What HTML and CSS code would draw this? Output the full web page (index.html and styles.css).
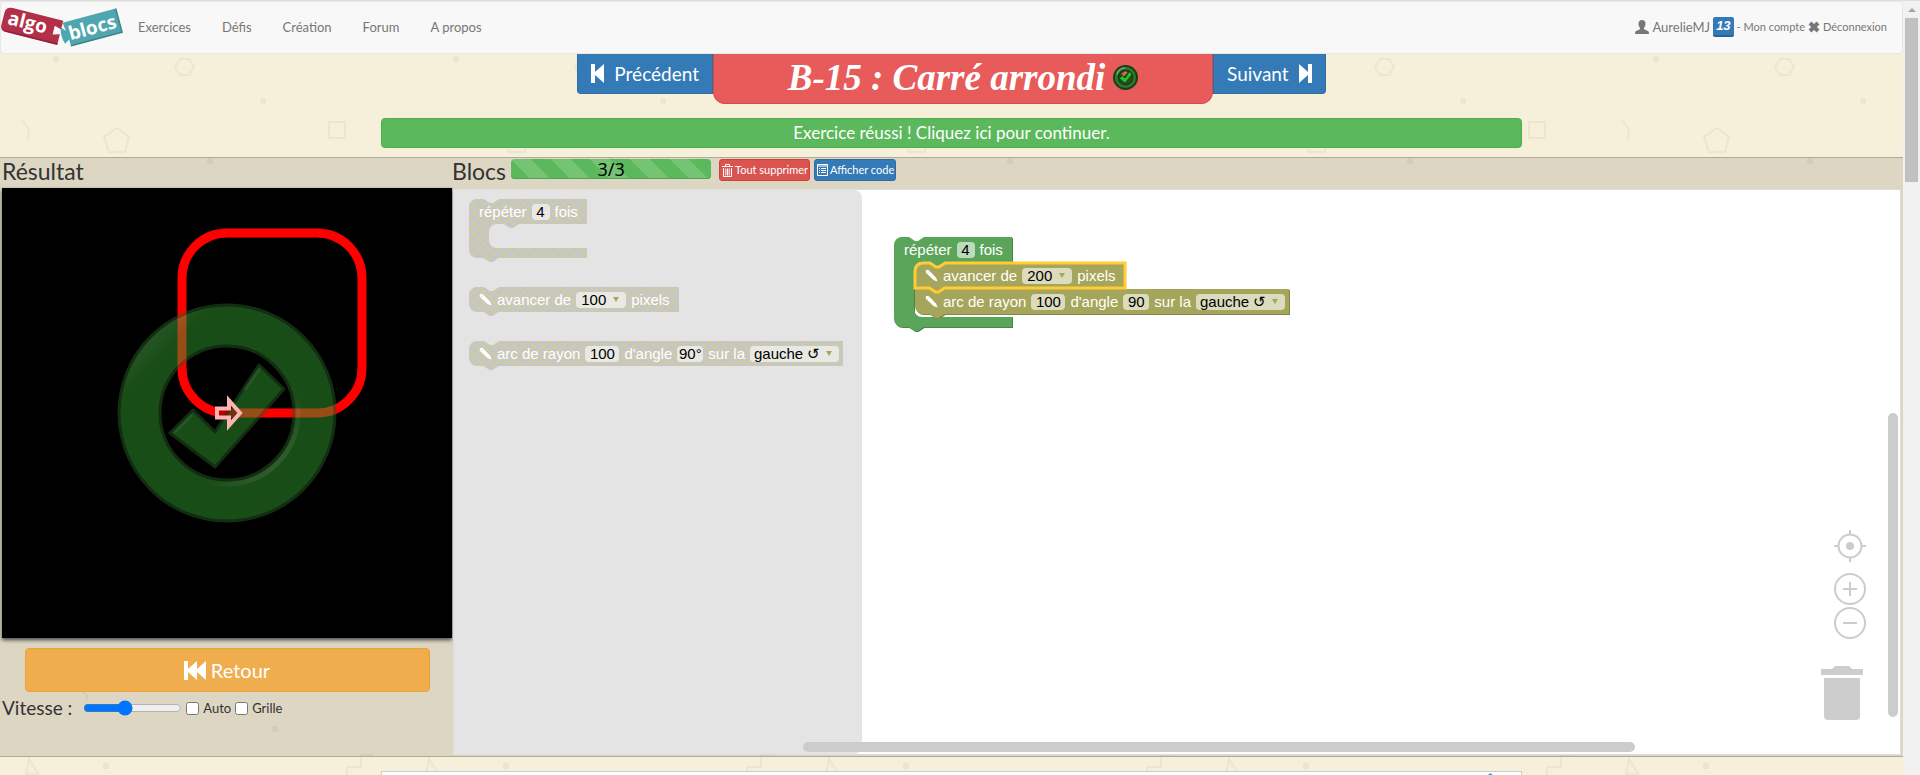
FILE: index.html
```html
<!DOCTYPE html>
<html lang="fr">
<head>
<meta charset="utf-8">
<title>AlgoBlocs - B-15 : Carré arrondi</title>
<link rel="stylesheet" href="styles.css">
</head>
<body>
<svg class="defs" width="0" height="0" aria-hidden="true">
  <defs>
    <pattern id="disabled" width="10" height="10" patternUnits="userSpaceOnUse">
      <rect width="10" height="10" fill="#c6c6c6"/>
      <path d="M0 0l10 10M10 0L0 10" stroke="#d3d284" stroke-width="1"/>
    </pattern>
    <symbol id="pencil" viewBox="0 0 14 14">
      <path d="M1 1.500Q2.500 0 4.500 1.500L12 9.500 13.500 13.500 9.500 12 1.500 4.500Q0 3 1 1.500z" fill="#fff"/>
      <path d="M2.500 4.500l2-2" stroke="#b5b5a0" stroke-width=".5"/>
    </symbol>
  </defs>
</svg>

<div class="page">
  <nav class="navbar">
    <a class="logo" href="#" aria-label="algo blocs">
      <svg width="124" height="42" viewBox="0 0 124 42">
        <g transform="rotate(14 30 20)">
          <path d="M8 7H60V16l-7-2v9l7-2V32H7Q1 32 1 26V14Q1 7 8 7z" fill="#b32f48"/>
          <path d="M5 31H60" stroke="#8e2338" stroke-width="1.500"/>
          <text x="6" y="24" class="logo-text">algo</text>
        </g>
        <g transform="rotate(-15 92 22)">
          <path d="M64 9H119V34H66V27l-5 3q-3-8 0-17l4 5z" fill="#4fa6af"/>
          <path d="M66 33.500H119V9" stroke="#3b868e" stroke-width="1.500" fill="none"/>
          <text x="67" y="28" class="logo-text">blocs</text>
        </g>
      </svg>
    </a>
    <div class="nav-links">
      <a href="#">Exercices</a><a href="#">Défis</a><a href="#">Création</a><a href="#">Forum</a><a href="#">A propos</a>
    </div>
    <div class="user">
      <a href="#" class="user-name"><svg width="14" height="14" viewBox="0 0 14 14"><path d="M7 0c2.500 0 3.700 1.700 3.500 4.200C10.300 6 9.500 7 9 8v1.200L13 11q1 .5 1 3H0q0-2.500 1-3L5 9.200V8C4.500 7 3.700 6 3.500 4.200 3.300 1.700 4.500 0 7 0z" fill="currentColor"/></svg>AurelieMJ</a>
      <span class="level">13</span>
      <a href="#" class="small">- Mon compte</a>
      <a href="#" class="small logout"><svg width="12" height="12" viewBox="0 0 12 12"><path d="M2 2l8 8M10 2l-8 8" stroke="currentColor" stroke-width="4"/></svg>Déconnexion</a>
    </div>
  </nav>

  <header class="title-row">
    <button class="step prev"><svg width="13" height="19" viewBox="0 0 13 19"><path d="M0 0h4v8l9-8v19l-9-8v8H0z" fill="#fff"/></svg>Précédent</button>
    <h1>B-15 : Carré arrondi
      <svg width="25" height="25" viewBox="0 0 26 26"><circle cx="13" cy="13" r="12" fill="#2b782b" stroke="#153f17" stroke-width="2"/><circle cx="13" cy="13" r="7.500" fill="#2e4a25" stroke="#153f17" stroke-width="1.500"/><path d="M4 10a9.500 9.500 0 0 1 9-7" stroke="#7fae7f" stroke-width="1.500" fill="none"/><path d="M9 9q4-4 6-1l-4 4z" fill="#e85b5b"/><path d="M6.500 14l3-3 3 2.500 4.500-6.500 3 2.500-7.500 9.500z" fill="#23c427" stroke="#11400f"/></svg>
    </h1>
    <button class="step next">Suivant<svg width="13" height="19" viewBox="0 0 13 19"><path d="M13 0H9v8L0 0v19l9-8v8h4z" fill="#fff"/></svg></button>
  </header>

  <div class="container"><button class="success">Exercice réussi ! Cliquez ici pour continuer.</button></div>

  <main class="workshop">
    <section class="result">
      <h2>Résultat</h2>
      <svg class="canvas" viewBox="0 0 450 450">
        <defs>
          <linearGradient id="shine" x1="0" y1="0" x2="1" y2="1"><stop offset=".1" stop-color="#62b45e"/><stop offset=".22" stop-color="#329a2e"/></linearGradient>
          <linearGradient id="shine-in" x1="0" y1="0" x2="1" y2="1"><stop offset=".68" stop-color="#62b45e" stop-opacity="0"/><stop offset=".86" stop-color="#62b45e"/></linearGradient>
        </defs>
        <rect width="450" height="450" fill="#000"/>
        <rect x="180" y="45" width="180" height="180" rx="45" fill="none" stroke="#f00" stroke-width="9"/>
        <g opacity=".5">
          <path fill-rule="evenodd" fill="url(#shine)" d="M225 116a109 109 0 1 0 .1 0zM225 157a68 68 0 1 1-.1 0z"/>
          <circle cx="225" cy="225" r="71" fill="none" stroke="url(#shine-in)" stroke-width="5"/>
          <circle cx="225" cy="225" r="108" fill="none" stroke="#245a22" stroke-width="3"/>
          <circle cx="225" cy="225" r="67" fill="none" stroke="#245a22" stroke-width="3"/>
          <path d="M168 245l23-23 22 22 44-67 25 24-69 78z" fill="#329a2e" stroke="#245a22" stroke-width="3" stroke-linejoin="round"/>
          <path d="M243 202l15-22M172 245l18-18" stroke="#62b45e" stroke-width="3" opacity=".7"/>
        </g>
        <path d="M215 220.500h12v-8L238 225l-11 12.500v-8H215z" fill="#000" fill-opacity=".3" stroke="#ffb3b3" stroke-width="4"/>
      </svg>
      <button class="back"><svg width="22" height="19" viewBox="0 0 22 19"><path d="M0 0h4v8l9-8v8l9-8v19l-9-8v8l-9-8v8H0z" fill="#fff"/></svg>Retour</button>
      <div class="controls">
        <label class="speed" for="speed">Vitesse :</label>
        <input type="range" id="speed" min="0" max="100" value="41">
        <label><input type="checkbox">Auto</label>
        <label><input type="checkbox">Grille</label>
      </div>
    </section>

    <section class="editor">
      <div class="toolbar">
        <h2>Blocs</h2>
        <div class="progress">3/3</div>
        <button class="mini danger"><svg width="11" height="13" viewBox="0 0 11 13"><path d="M0 2.500h11M3.500 2V.5h4V2M1.500 4v8.500h8V4M3.800 4.500v7M5.500 4.500v7M7.200 4.500v7" stroke="#fff" fill="none"/></svg>Tout supprimer</button>
        <button class="mini primary"><svg width="11" height="12" viewBox="0 0 11 12"><path d="M.5.5h10v11H.5zM0 2h11M2 4.500h1M4 4.500h5M2 6.500h1M4 6.500h5M2 8.500h1M4 8.500h5" stroke="#fff" fill="none"/></svg>Afficher code</button>
      </div>
      <div class="blockly">
        <div class="flyout"></div>

        <div class="block f-repeat">
          <svg class="shape" width="122" height="66"><path fill="url(#disabled)" d="M0 8A8 8 0 0 1 8 0H15l6 4h3l6-4H118V25H50l-6 4h-3l-6-4H28a8 8 0 0 0-8 8v8a8 8 0 0 0 8 8H118V59H29.500l-6 4h-3l-6-4H8a8 8 0 0 1-8-8z"/></svg>
          <span>répéter</span><input class="w1" value="4" aria-label="Nombre de répétitions"><span>fois</span>
        </div>
        <div class="block f-avancer">
          <svg class="shape" width="214" height="32"><path fill="url(#disabled)" d="M0 8A8 8 0 0 1 8 0H15l6 4h3l6-4H210V25H29.500l-6 4h-3l-6-4H8a8 8 0 0 1-8-8z"/></svg>
          <svg class="pencil" width="13" height="13"><use href="#pencil"/></svg><span>avancer de</span><span class="drop w-num"><select aria-label="Distance"><option>100</option></select></span><span>pixels</span>
        </div>
        <div class="block f-arc">
          <svg class="shape" width="378" height="32"><path fill="url(#disabled)" d="M0 8A8 8 0 0 1 8 0H15l6 4h3l6-4H374V25H29.500l-6 4h-3l-6-4H8a8 8 0 0 1-8-8z"/></svg>
          <svg class="pencil" width="13" height="13"><use href="#pencil"/></svg><span>arc de rayon</span><input class="w3" value="100" aria-label="Rayon"><span>d'angle</span><input class="w2" value="90°" aria-label="Angle"><span>sur la</span><span class="drop w-dir"><select aria-label="Direction"><option>gauche ↺</option></select></span>
        </div>

        <div class="block w-repeat">
          <svg class="shape" width="122" height="98"><path fill="#498449" d="M1 50H21V80H119V91H30.500l-6 4h-3l-6-4H9a8 8 0 0 1-8-8zM100 1h19v24h-19z"/><path fill="#5ba55b" d="M0 8A8 8 0 0 1 8 0H15l6 4h3l6-4H118V25H52l-6 5h-7l-6-5H28a8 8 0 0 0-8 8V72a8 8 0 0 0 8 8H118V90H29.500l-6 4h-3l-6-4H8a8 8 0 0 1-8-8z"/></svg>
          <span>répéter</span><input class="w1" value="4" aria-label="Nombre de répétitions"><span>fois</span>
        </div>
        <div class="block w-arc">
          <svg class="shape" width="378" height="33"><path fill="#80844a" d="M1 10H360V1H375V26H30.500l-6 4h-3l-6-4H9a8 8 0 0 1-8-8z"/><path fill="#a5a55b" d="M0 0H374V25H29.500l-6 4h-3l-6-4H8a8 8 0 0 1-8-8z"/></svg>
          <svg class="pencil" width="13" height="13"><use href="#pencil"/></svg><span>arc de rayon</span><input class="w3" value="100" aria-label="Rayon"><span>d'angle</span><input class="w2" value="90" aria-label="Angle"><span>sur la</span><span class="drop w-dir"><select aria-label="Direction"><option>gauche ↺</option></select></span>
        </div>
        <div class="block w-avancer">
          <svg class="shape" width="214" height="34"><path fill="#a5a55b" stroke="#fc3" stroke-width="3" d="M0 9A8 8 0 0 1 8 1H15l6 4h3l6-4H210V26H29.500l-6 4h-3l-6-4H0z"/></svg>
          <svg class="pencil" width="13" height="13"><use href="#pencil"/></svg><span>avancer de</span><span class="drop w-num"><select aria-label="Distance"><option>200</option></select></span><span>pixels</span>
        </div>

        <div class="tools">
          <button aria-label="Centrer"><svg width="32" height="32" viewBox="0 0 32 32" fill="none" stroke="#ccc" stroke-width="2"><circle cx="16" cy="16" r="11.500"/><circle cx="16" cy="16" r="4" fill="#ccc" stroke="none"/><path d="M16 0v5M16 27v5M0 16h5M27 16h5"/></svg></button>
          <button class="zoom-in" aria-label="Agrandir"><svg width="32" height="32" viewBox="0 0 32 32" fill="none" stroke="#ccc" stroke-width="2"><circle cx="16" cy="16" r="15"/><path d="M9 16h14M16 9v14"/></svg></button>
          <button aria-label="Réduire"><svg width="32" height="32" viewBox="0 0 32 32" fill="none" stroke="#ccc" stroke-width="2"><circle cx="16" cy="16" r="15"/><path d="M9 16h14"/></svg></button>
          <svg class="trash" width="42" height="54" viewBox="0 0 42 54" fill="#cdcdcd"><path d="M0 3h11l3-3h14l3 3h11v6H0zM3 12h36v38q0 4-4 4H7q-4 0-4-4z"/></svg>
        </div>
        <div class="vbar"></div>
        <div class="hbar"></div>
      </div>
    </section>
  </main>

  <div class="container"><article class="statement"><svg width="20" height="10" viewBox="0 0 20 10"><path d="M0 2l2-2 3 2 4 3v5H0z" fill="#12b4d8"/></svg></article></div>
</div>

<div class="scrollbar" aria-hidden="true"><span class="arrow"></span><span class="thumb"></span></div>
</body>
</html>
```
FILE: styles.css
```css
* { box-sizing: border-box; }
body {
  margin: 0;
  height: 100vh;
  overflow: hidden;
  display: flex;
  font: 13px/20px Lato, "Open Sans", sans-serif;
  color: #333;
  background: #f6efda url("data:image/svg+xml,%3Csvg xmlns='http://www.w3.org/2000/svg' width='400' height='800' fill='none' stroke='%23ede5d0' stroke-width='2'%3E%3Ccircle cx='56' cy='59' r='3' fill='%23ede5d0' stroke='none'/%3E%3Cpath d='M175 67l5-8h9l5 8-5 8h-9z'/%3E%3Ccircle cx='263' cy='101' r='3' fill='%23ede5d0' stroke='none'/%3E%3Cpath d='M22 121q10 7 5 19M117 128l12 9-4 15h-16l-5-15zM329 122h16v16h-16z'/%3E%3Cpath d='M207 158h6v6h-6zM272 726h6v6h-6zM103 763h6v6h-6z' fill='%23ede5d0' stroke='none'/%3E%3Cpath d='M82 692l6 4-3 5M29 759l-3 15h12zM374 755h-13v12h-14v20'/%3E%3C/svg%3E") 0 0 / 400px 800px;
}
.defs { position: absolute; }
button, input, select { font: inherit; color: inherit; }
button { cursor: pointer; }
h1, h2 { margin: 0; font-weight: 400; }
svg { flex: none; }

.page { flex: 1; min-width: 0; border-top: 1px solid #ddd; }

.navbar {
  display: flex;
  align-items: center;
  height: 53px;
  padding-right: 15px;
  padding-bottom: 2px;
  background: #f8f8f8;
  border: 1px solid #e7e7e7;
  border-radius: 4px;
  color: #777;
}
.navbar a { color: inherit; text-decoration: none; }
.logo { height: 42px; }
.logo-text { font: 700 19px "Open Sans", sans-serif; fill: #fff; }
.nav-links { display: flex; flex: 1; gap: 31px; padding-left: 13px; }
.user { display: flex; align-items: center; gap: 3px; }
.user-name, .logout { display: flex; align-items: center; gap: 3px; }
.level {
  padding: 0 3px;
  border-bottom: 2px solid #2a6496;
  border-radius: 2px;
  background: #337ab7;
  color: #fff;
  font: italic 700 13px/18px "Liberation Sans", sans-serif;
}
.small { font-size: 11px; }

.title-row { display: flex; justify-content: center; align-items: flex-start; }
.step {
  display: flex;
  align-items: center;
  gap: 10px;
  height: 40px;
  padding: 0 13px;
  border: 1px solid #2e6da4;
  border-top: 0;
  background: #337ab7;
  color: #fff;
  font-size: 19px;
}
.prev { border-radius: 0 0 0 4px; }
.next { border-radius: 0 0 4px 0; }
h1 {
  display: flex;
  justify-content: center;
  align-items: center;
  gap: 8px;
  width: 500px;
  height: 50px;
  padding-bottom: 2px;
  border: 1px solid #d44a4a;
  border-top: 0;
  border-radius: 0 0 12px 12px;
  background: #e85b5b;
  color: #fff;
  font: italic 700 37px/44px "Liberation Serif", serif;
}
.container { width: 60%; margin: 0 auto; }
.success {
  display: block;
  width: 100%;
  height: 30px;
  margin: 14px 0 9px;
  border: 1px solid #4cae4c;
  border-radius: 4px;
  background: #5cb85c;
  color: #fff;
  font-size: 17px;
  line-height: 24px;
}

.workshop {
  display: flex;
  padding: 0 2px 1px;
  border: solid #b0aa9b;
  border-width: 1px 0;
  background: rgba(0, 0, 0, .1);
}
h2 { font-size: 23px; line-height: 26px; }
.result { width: 450px; padding-bottom: 33px; }
.canvas { display: block; width: 100%; margin-top: 4px; box-shadow: 0 2px 4px #444; }
.back {
  display: flex;
  justify-content: center;
  align-items: center;
  gap: 5px;
  width: 90%;
  height: 44px;
  margin: 10px auto 0;
  border: 1px solid #eea236;
  border-radius: 4px;
  background: #f0ad4e;
  color: #fff;
  font-size: 20px;
}
.controls { display: flex; align-items: center; padding-top: 2px; }
.controls label { display: flex; align-items: center; gap: 4px; margin-left: 4px; }
.controls label.speed { margin: 0 11px 0 0; font-size: 19px; line-height: 28px; }
.controls input { margin: 0; }
#speed { width: 99px; }

.editor { flex: 1; min-width: 0; display: flex; flex-direction: column; }
.toolbar { display: flex; align-items: flex-start; height: 31px; padding-top: 1px; }
.toolbar h2 { margin-right: 5px; line-height: 24px; }
.progress {
  width: 200px;
  height: 20px;
  margin-right: 8px;
  border-radius: 4px;
  background: repeating-linear-gradient(45deg, #5cb85c 0 14px, #74c474 14px 28px);
  box-shadow: inset 0 -1px 0 #4fa44f;
  color: #000;
  font: 18px/20px "Noto Sans", sans-serif;
  text-align: center;
}
.mini {
  display: flex;
  align-items: center;
  gap: 2px;
  height: 22px;
  margin-right: 4px;
  padding: 0 1px 0 2px;
  border: 1px solid;
  border-radius: 3px;
  color: #fff;
  font-size: 11px;
  line-height: 18px;
}
.danger { background: #d9534f; border-color: #d43f3a; }
.primary { background: #337ab7; border-color: #2e6da4; }

.blockly {
  position: relative;
  flex: 1;
  margin-left: 1px;
  overflow: hidden;
  border: 1px solid #ddd;
  background: #fff;
  font: 15px/16px "Liberation Sans", Arial, sans-serif;
}
.flyout {
  position: absolute;
  inset: 0 auto 0 0;
  width: 408px;
  border-radius: 0 8px 8px 0;
  background: #e4e4e4;
}
.block {
  position: absolute;
  isolation: isolate;
  display: flex;
  align-items: center;
  gap: 5px;
  height: 25px;
  padding-left: 10px;
  color: #fff;
  white-space: nowrap;
}
.block .shape { position: absolute; left: 0; top: 0; z-index: -1; overflow: visible; }
.f-repeat { left: 15px; top: 9px; }
.f-avancer { left: 15px; top: 97px; }
.f-arc { left: 15px; top: 151px; }
.w-repeat { left: 440px; top: 47px; }
.w-avancer { left: 461px; top: 72px; height: 27px; }
.w-arc { left: 461px; top: 99px; }
.block input, .drop {
  height: 16px;
  padding: 0;
  border: 0;
  border-radius: 4px;
  background: rgba(255, 255, 255, .6);
  color: #000;
  text-align: center;
}
.w1 { width: 18px; }
.w2 { width: 26px; }
.w3 { width: 34px; }
.drop { display: flex; align-items: center; padding: 0 7px 0 5px; }
.drop::after { content: ""; border: 3px solid transparent; border-top: 5px solid #a5a55b; border-bottom: 0; }
.w-num { width: 50px; }
.w-dir { width: 89px; padding-left: 4px; }
.drop select {
  flex: 1;
  min-width: 0;
  height: 16px;
  padding: 0;
  border: 0;
  background: none;
  appearance: none;
}

.tools {
  position: absolute;
  right: 34px;
  bottom: 34px;
  display: flex;
  flex-direction: column;
  align-items: flex-end;
}
.tools button { height: 32px; padding: 0; border: 0; background: none; margin-bottom: 2px; }
.tools .zoom-in { margin-top: 9px; }
.trash { margin: 25px 3px 0 0; }
.vbar, .hbar { position: absolute; border-radius: 5px; background: #ccc; }
.vbar { right: 2px; top: 223px; bottom: 37px; width: 10px; }
.hbar { left: 349px; right: 265px; bottom: 2px; height: 10px; }

.statement { display: flex; justify-content: flex-end; margin-top: 14px; height: 60px; padding: 1px 13px; border: 1px solid #ccc; background: #fff; }

.scrollbar { width: 17px; display: flex; flex-direction: column; align-items: center; background: #f1f1f1; border-top: 1px solid #ddd; }
.arrow { margin: 7px 0 6px; border: 4px solid transparent; border-bottom-color: #a3a3a3; border-top: 0; }
.thumb { width: 13px; height: 164px; background: #c1c1c1; }
```
